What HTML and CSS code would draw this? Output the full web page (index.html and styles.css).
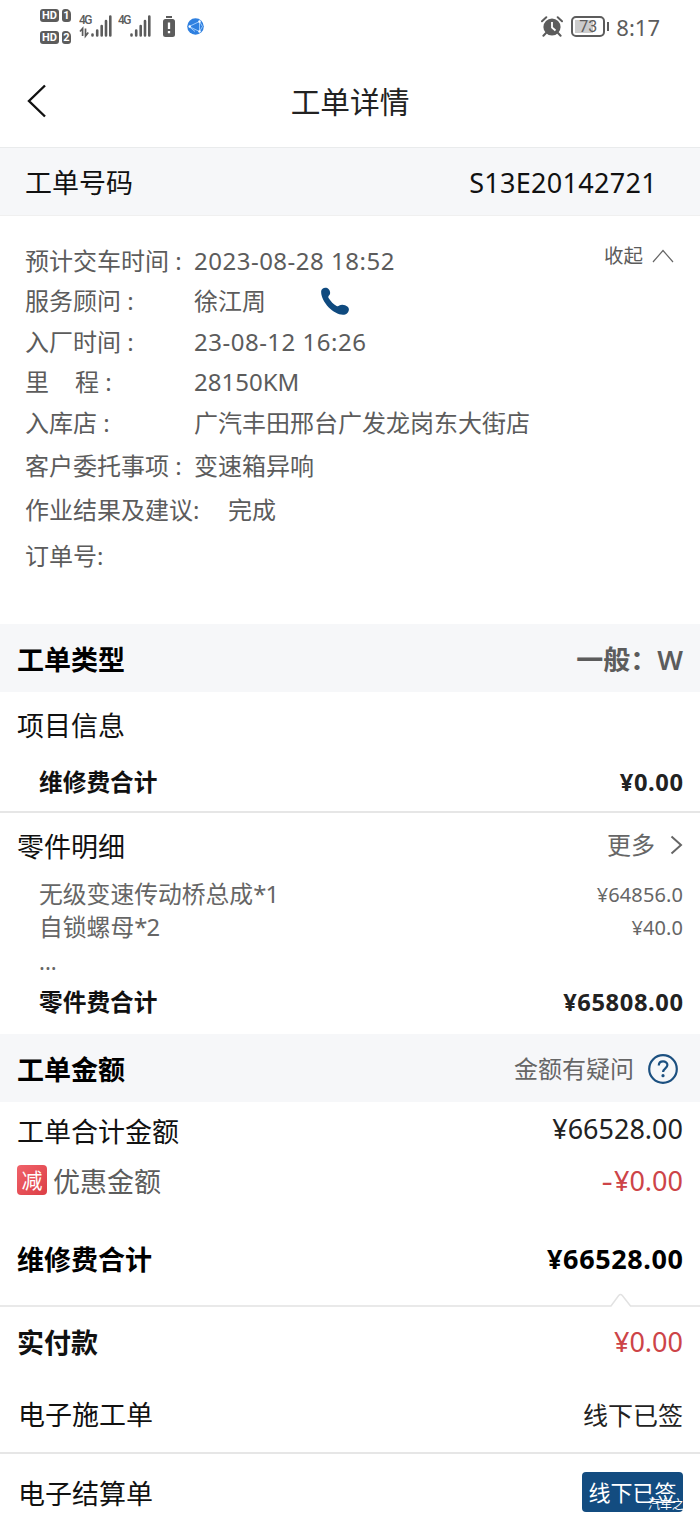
FILE: index.html
```html
<!DOCTYPE html>
<html lang="zh-CN">
<head>
<meta charset="utf-8">
<title>工单详情</title>
<link rel="stylesheet" href="styles.css">
</head>
<body>
<div class="status">
  <div class="status-left">
    <div class="sims">
      <div class="sim"><span class="hd">HD</span><span class="num">1</span></div>
      <div class="sim"><span class="hd">HD</span><span class="num">2</span></div>
    </div>
    <svg class="signal" width="34" height="26" viewBox="0 0 34 26">
      <text x="0" y="10" class="gen">4G</text>
      <g stroke="#5c5c5c" stroke-width="2.6" stroke-linecap="round"><path d="M13.5 20.5v1M18.2 16.5v5M22.7 12v9.500M27 7v14.500M31.300 2.500v19"/></g>
      <path d="M3.600 22v-7.500l-2.600 3M6.500 14.500v7.500l2.800-3.500" fill="none" stroke="#5c5c5c" stroke-width="1.7"/>
    </svg>
    <svg class="signal second" width="34" height="26" viewBox="0 0 34 26">
      <text x="0" y="10" class="gen">4G</text>
      <g stroke="#5c5c5c" stroke-width="2.6" stroke-linecap="round"><path d="M13.500 20.500v1M18.200 16.500v5M22.700 12v9.500M27 7v14.500M31.300 2.500v19"/></g>
    </svg>
    <svg class="warn" width="12" height="21" viewBox="0 0 12 21"><path d="M3 0h6v2H3z" fill="#5c5c5c"/><rect y="3" width="12" height="18" rx="2.500" fill="#5c5c5c"/><path d="M6 6.500v6.500M6 15v2.300" stroke="#fff" stroke-width="2.300"/></svg>
    <svg class="globe" width="17" height="17" viewBox="0 0 17 17"><circle cx="8.500" cy="8.500" r="8.300" fill="#2f80e0"/><path d="M2 8.500L12.500 3.500V13.500zM12.500 3.500L15.500 8.500 12.500 13.500M2 8.500L8 13.500" fill="none" stroke="#a9d3ff" stroke-width=".9"/><g fill="#fff"><circle cx="2.700" cy="8.500" r="1.200"/><circle cx="12.500" cy="3.500" r="1.200"/><circle cx="12.500" cy="13.500" r="1.200"/></g></svg>
  </div>
  <div class="status-right">
    <svg width="22" height="21" viewBox="0 0 22 21"><circle cx="11" cy="11" r="8.600" fill="#5c5c5c"/><path d="M1 5.200L5.300 1.200M21 5.200L16.700 1.200M5 17l-2.600 2.800M17 17l2.600 2.800" stroke="#5c5c5c" stroke-width="2" stroke-linecap="round"/><path d="M11 6v5.500l3.500 3" fill="none" stroke="#fff" stroke-width="1.800"/></svg>
    <div class="battery"><span>73</span></div><i class="cap"></i>
    <span class="clock">8:17</span>
  </div>
</div>

<header class="nav">
  <svg width="20" height="34" viewBox="0 0 20 34"><path d="M18 1.500L2 17l16 15.500" fill="none" stroke="#111" stroke-width="2.400"/></svg>
  <h1>工单详情</h1>
</header>

<div class="band number"><span>工单号码</span><span class="code">S13E20142721</span></div>

<section class="details">
  <div class="fold">收起<svg width="22" height="14" viewBox="0 0 22 14"><path d="M1 13L11 1.500 21 13" fill="none" stroke="#666" stroke-width="1.200"/></svg></div>
  <div class="row r40"><span class="label">预计交车时间 :</span><span class="latin">2023-08-28 18:52</span></div>
  <div class="row r40"><span class="label">服务顾问 :</span><span>徐江周</span>
    <svg class="phone" width="30" height="29" viewBox="0 0 30 29"><path d="M1.200 4C1.500.8 6.400-.5 8.700 2.300c1.600 1.900 2 4.600.5 6-1 1-1.200 1.700-.4 3 2 3.300 4.600 5.900 7.800 7.700 1.100.6 1.700.4 2.700-.4 2-1.600 6-1 8.400 1.200 2.600 2.400.7 6.700-2.500 7.700C15.500 30 .2 15 1.200 4z" fill="#0f4a7f"/></svg>
  </div>
  <div class="row r41"><span class="label">入厂时间 :</span><span class="latin">23-08-12 16:26</span></div>
  <div class="row r39"><span class="label"><span class="wide">里</span>程 :</span><span class="mileage">28150KM</span></div>
  <div class="row r42"><span class="label">入库店 :</span><span>广汽丰田邢台广发龙岗东大街店</span></div>
  <div class="row r44"><span class="label">客户委托事项 :</span><span>变速箱异响</span></div>
  <div class="row r44"><span class="label long">作业结果及建议:</span><span>完成</span></div>
  <div class="row r48"><span class="label">订单号:</span></div>
</section>

<div class="band heavy"><span>工单类型</span><span class="kind">一般：<b>W</b></span></div>
<section class="project">
  <h2>项目信息</h2>
  <div class="sum"><span>维修费合计</span><span class="sum-price">¥0.00</span></div>
</section>
<section class="parts">
  <div class="head"><h2>零件明细</h2><span class="more">更多<svg width="13" height="20" viewBox="0 0 13 20"><path d="M1.500 1.500L11 10l-9.500 8.500" fill="none" stroke="#666" stroke-width="2"/></svg></span></div>
  <div class="part"><span>无级变速传动桥总成<span class="count">*1</span></span><span class="price">¥64856.0</span></div>
  <div class="part"><span>自锁螺母<span class="count">*2</span></span><span class="price">¥40.0</span></div>
  <div class="part dots">...</div>
  <div class="sum"><span>零件费合计</span><span class="sum-price">¥65808.00</span></div>
</section>

<div class="band heavy"><span>工单金额</span><span class="ask">金额有疑问<svg width="30" height="30" viewBox="0 0 30 30"><circle cx="15" cy="15" r="13.800" fill="none" stroke="#1c5080" stroke-width="2.200"/><path d="M10.800 11.500c0-5.500 8.600-5.300 8.600-.4 0 3.300-4.300 3.200-4.300 7" fill="none" stroke="#1c5080" stroke-width="2.200"/><circle cx="15" cy="21.700" r="1.600" fill="#1c5080"/></svg></span></div>
<section class="amounts">
  <div class="line total"><span>工单合计金额</span><span class="money raised">¥66528.00</span></div>
  <div class="line discount"><span class="off"><i>减</i>优惠金额</span><span class="money red"><span class="minus">-</span>¥0.00</span></div>
  <div class="line grand"><span>维修费合计</span><span class="money">¥66528.00</span></div>
</section>
<svg class="notch" width="700" height="14" viewBox="0 0 700 14"><path d="M0 13H611l7.500-10.300q2-2.400 4 0L630.500 13H700" fill="none" stroke="#e2e2e2" stroke-width="1.500"/></svg>
<section class="signs">
  <div class="line paid"><b>实付款</b><span class="money red">¥0.00</span></div>
  <div class="line work"><span>电子施工单</span><span class="signed">线下已签</span></div>
  <div class="line settle"><span>电子结算单</span><span class="button">线下已签</span><span class="mark">汽车之</span></div>
</section>
</body>
</html>
```
FILE: styles.css
```css
* { box-sizing: border-box; }
body {
  margin: 0;
  width: 700px;
  height: 1516px;
  overflow: hidden;
  background: #fff;
  color: #111;
  font-family: "Noto Sans", "Noto Sans CJK SC", sans-serif;
  font-size: 27px;
}
h1, h2 { margin: 0; font-weight: 400; }
svg { display: block; flex: none; }
i { font-style: normal; }

.status { height: 55px; display: flex; justify-content: space-between; padding: 0 40px; color: #5c5c5c; }
.status-left { display: flex; }
.sims { display: flex; flex-direction: column; gap: 9px; padding-top: 9px; }
.sim { display: flex; gap: 3px; height: 13px; }
.sim span { background: #5c5c5c; color: #fff; font: bold 11px/13px Roboto, sans-serif; text-align: center; border-radius: 3px; }
.sim .hd { width: 19px; }
.sim .num { width: 9px; border-top-right-radius: 5px; }
.signal { margin: 14px 0 0 8px; }
.signal.second { margin-left: 5px; }
.gen { font: 500 12px Roboto, sans-serif; fill: #5c5c5c; letter-spacing: -1.500px; }
.warn { margin: 16px 0 0 11px; }
.globe { margin: 18px 0 0 12px; }
.status-right { display: flex; align-items: center; height: 53px; }
.battery { width: 34px; height: 21px; margin-left: 8px; border: 2px solid #5c5c5c; border-radius: 5px; padding: 2px; }
.battery span { display: block; height: 13px; font: 16px/14px Roboto, sans-serif; text-align: center; background: linear-gradient(90deg, #ccc 70%, #fff 70%); }
.cap { width: 2px; height: 9px; margin-left: 2px; background: #5c5c5c; }
.clock { margin-left: 7px; font-size: 22px; }

.nav { height: 92px; display: grid; grid-template-columns: 50px 1fr 50px; align-items: center; padding: 0 0 0 27px; }
.nav h1 { font-size: 29.700px; line-height: 40px; text-align: center; color: #222; padding: 1px 27px 0 0; }

.band { height: 68px; display: flex; justify-content: space-between; align-items: center; background: #f6f7f9; padding: 3px 17px 0 17px; line-height: 65px; }
.number { height: 69px; border-top: 1px solid #e9ebec; border-bottom: 1px solid #f0f0f0; padding: 2px 43px 0 25px; }
.code { letter-spacing: .3px; }
.heavy { font-weight: 700; color: #000; }

.details { position: relative; height: 408px; padding: 25px 26px 0 25px; color: #5c5c5c; font-size: 24px; }
.fold { position: absolute; top: 25px; right: 26px; display: flex; align-items: center; gap: 9px; font-size: 19.500px; line-height: 30px; }
.row { display: flex; align-items: center; white-space: nowrap; }
.row .label { width: 169px; }
.row .label.long { width: 203px; }
.latin { letter-spacing: .5px; }
.wide { margin-right: 26px; }
.r40 { height: 40px; line-height: 40px; }
.r41 { height: 41px; line-height: 41px; }
.r39 { height: 39px; line-height: 39px; }
.r42 { height: 43px; line-height: 43px; }
.r44 { height: 44px; line-height: 44px; }
.r48 { height: 47px; line-height: 47px; }
.phone { margin-left: 54px; }

.kind { color: #5c5c5c; white-space: pre; }
.kind b { font-weight: 600; }
.project { height: 121px; border-bottom: 2px solid #e6e6e6; padding: 1px 17px 0 17px; }
.project h2 { font-size: 27px; line-height: 66px; }
.sum { display: flex; justify-content: space-between; padding-left: 22px; font-size: 23.700px; line-height: 47px; font-weight: 700; }
.sum-price { color: #222; letter-spacing: .6px; margin-right: -.6px; }
.parts { height: 221px; padding: 0 17px; }
.head { display: flex; justify-content: space-between; align-items: center; height: 66px; }
.head h2 { font-size: 27px; line-height: 66px; padding-top: 1px; }
.more { display: flex; align-items: center; gap: 15px; color: #666; font-size: 24px; line-height: 64px; padding-bottom: 2px; }
.part { display: flex; justify-content: space-between; padding-left: 22px; color: #666; font-size: 23.800px; line-height: 33px; margin-top: -1px; margin-bottom: 1px; }
.count { letter-spacing: -.8px; }
.price { font-size: 20px; letter-spacing: .1px; }
.dots { line-height: 34px; font-size: 22px; }
.parts .sum { line-height: 47px; }
.ask { display: flex; align-items: center; gap: 14px; padding-right: 5px; margin-top: -2px; font-size: 24px; font-weight: 400; color: #666; }

.line { display: flex; justify-content: space-between; align-items: center; padding: 0 17px; }
.amounts { height: 191px; }
.total { height: 54px; padding-top: 2px; }
.raised { margin-top: -4px; color: #222; }
.discount { height: 48px; }
.off { display: flex; align-items: center; gap: 6px; color: #5c5c5c; }
.off i { width: 30px; height: 30px; border-radius: 4px; background: linear-gradient(135deg, #f0626a, #dc3e45); color: #fff; font-size: 21px; line-height: 30px; text-align: center; }
.red { color: #cd4448; }
.minus { display: inline-block; transform: scaleX(1.3); transform-origin: right; margin-right: 1px; }
.grand { height: 109px; font-weight: 700; color: #000; }
.grand .money { letter-spacing: .6px; margin-right: -.6px; }
.paid { height: 71px; padding-bottom: 2px; }
.work { height: 76px; padding-bottom: 3px; border-bottom: 2px solid #e6e6e6; }
.work, .settle { padding-left: 18px; }
.signed { font-size: 25px; color: #222; }
.settle { position: relative; height: 76px; }
.button { width: 101px; height: 40px; border-radius: 4px; background: #134c80; color: #fff; font-size: 22px; line-height: 41px; text-align: center; }
.mark { position: absolute; left: 648px; top: 43px; color: #fff; font-size: 12px; line-height: 16px; }
```
